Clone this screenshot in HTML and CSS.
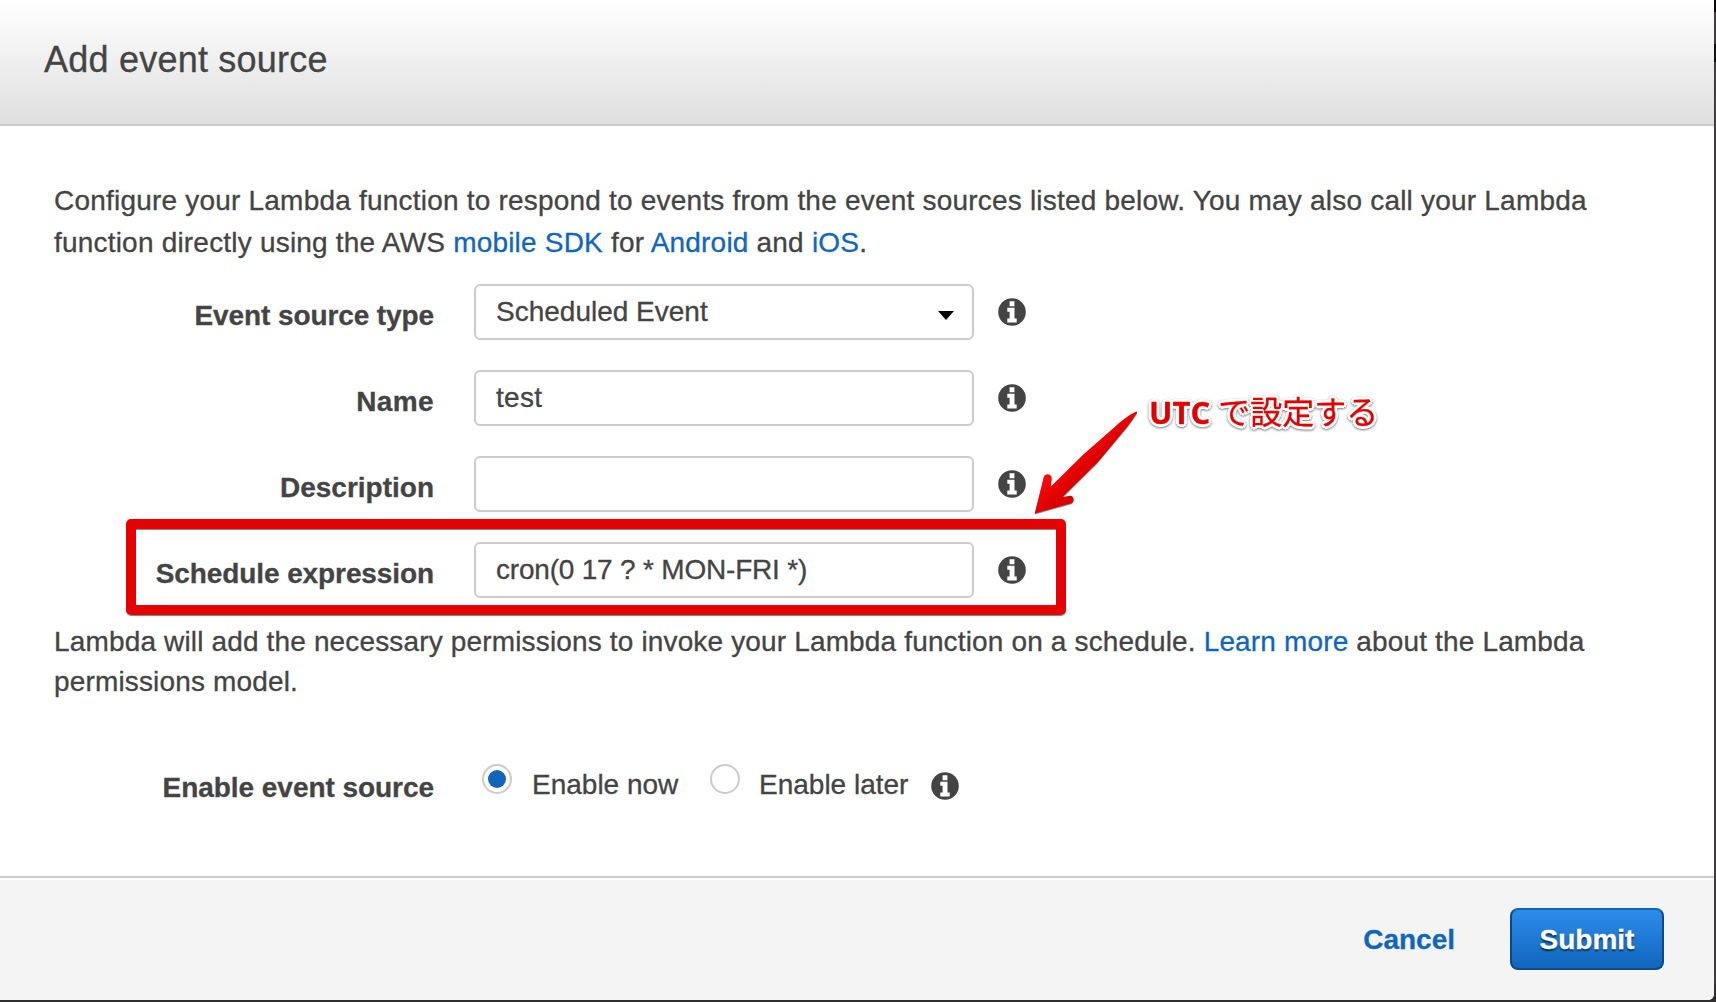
FILE: index.html
```html
<!DOCTYPE html>
<html lang="en">
<head>
<meta charset="utf-8">
<title>Add event source</title>
<link rel="stylesheet" href="styles.css">
</head>
<body>
<svg width="0" height="0" class="defs" aria-hidden="true">
  <symbol id="info" viewBox="0 0 28 28">
    <circle cx="14" cy="14" r="13.8" fill="#444"/>
    <path fill="#fff" d="M11.6 3.2h4.8v5h-4.8zM9.3 9.8h7.2v10.800h2.200v3.900H9.300v-3.900h2.300v-6.900H9.300z"/>
  </symbol>
</svg>
<main class="dialog">
  <header class="dialog-header"><h1 class="title">Add event source</h1></header>
  <section class="dialog-body">
    <p class="intro"><span class="line intro-first">Configure your Lambda function to respond to events from the event sources listed below. You may also call your Lambda</span> <span class="line intro-second">function directly using the AWS <a class="link">mobile SDK</a> for <a class="link">Android</a> and <a class="link">iOS</a>.</span></p>
    <div class="form">
      <div class="row"><label class="label type">Event source type</label><div class="field select">Scheduled Event<svg class="caret" viewBox="0 0 16 9"><path d="M0 0h16L8 9z"/></svg></div><svg class="info"><use href="#info"/></svg></div>
      <div class="row"><label class="label name">Name</label><div class="field test">test</div><svg class="info"><use href="#info"/></svg></div>
      <div class="row"><label class="label desc">Description</label><div class="field"></div><svg class="info"><use href="#info"/></svg></div>
      <div class="row"><label class="label sched">Schedule expression</label><div class="field cron">cron(0 17 ? * MON-FRI *)</div><svg class="info"><use href="#info"/></svg></div>
    </div>
    <p class="note"><span class="line note-first">Lambda will add the necessary permissions to invoke your Lambda function on a schedule. <a class="link">Learn more</a> about the Lambda</span> <span class="line note-second">permissions model.</span></p>
    <div class="enable">
      <span class="label enable-label">Enable event source</span>
      <span class="radio checked"></span><span class="option now">Enable now</span>
      <span class="radio"></span><span class="option later">Enable later</span>
      <svg class="info enable-info"><use href="#info"/></svg>
    </div>
  </section>
  <footer class="dialog-footer"><a class="cancel">Cancel</a><button class="submit">Submit</button></footer>
</main>
<div class="highlight"></div>
<svg class="arrow" viewBox="0 0 110 110">
  <defs><linearGradient id="red" x1="30" y1="55" x2="50" y2="75" gradientUnits="userSpaceOnUse"><stop offset="0" stop-color="#fb0505"/><stop offset=".8" stop-color="#d80000"/></linearGradient></defs>
  <path fill="url(#red)" d="M104.800 .8Q106.500 0 105.800 2C101 10 94 19 84 30.500L66.500 51.500L31.500 86L39 84.800C43.500 84.500 44 91.500 39.500 92.500L3.700 102.500L12.800 66C14 61.500 21 62.500 20.600 67.500L19.700 75.700L52.300 43.500L82 17.500C90 10 97 4.500 104.800 .8Z"/>
</svg>
<div class="annotation"><b class="utc">UTC</b> <span class="ja">で設定する</span></div>
</body>
</html>
```
FILE: styles.css
```css
* { box-sizing: border-box; }
body { margin: 0; height: 1002px; overflow: hidden; position: relative; background: linear-gradient(#080808 0 12px, #3f3d3e 12px 44px, #111 44px 62px, #3f3d3e 62px 980px, #302e2f 990px); color: #444; font: 28px/42px "Liberation Sans", Arial, sans-serif; -webkit-text-stroke: .3px; }
.defs { position: absolute; }
.dialog { width: 1714px; height: 1000px; display: flex; flex-direction: column; background: #fff; border-bottom-right-radius: 6px; overflow: hidden; }
.dialog-header { height: 126px; padding: 39px 44px 0; background: linear-gradient(#fff, #dfdfdf); border-bottom: 2px solid #ccc; }
.title { margin: 0; font-size: 36px; font-weight: 400; line-height: 42px; letter-spacing: .22px; }
.dialog-body { height: 750px; padding: 53px 54px 0; }
.intro, .note { margin: 0; }
.line { display: block; white-space: nowrap; width: max-content; }
.intro { height: 105px; line-height: 42px; padding-top: 1px; }
.intro-first { letter-spacing: .208px; }
.intro-second { letter-spacing: .2px; }
.note { line-height: 40px; height: 120px; padding-top: 24px; letter-spacing: .153px; }
.link, .cancel { color: #1166bb; }
.form { display: flex; flex-direction: column; gap: 30px; }
.row { display: flex; align-items: center; height: 56px; }
.label { width: 380px; flex: none; text-align: right; font-weight: 700; white-space: nowrap; padding-top: 8px; }
.type, .sched { letter-spacing: -.1px; }
.name { letter-spacing: .4px; }
.field { width: 500px; height: 56px; margin-left: 40px; padding: 5px 20px; border: 2px solid #ccc; border-radius: 6px; display: flex; justify-content: space-between; white-space: nowrap; }
.test { letter-spacing: .3px; }
.cron { letter-spacing: -.2px; }
.caret { width: 16px; height: 9px; margin: 20px -2px 0 0; }
.info { width: 28px; height: 28px; margin-left: 24px; flex: none; }
.enable { display: flex; height: 42px; margin-top: 46px; }
.enable-label { padding-top: 3px; letter-spacing: -.05px; }
.enable-info { margin-top: 8px; }
.radio { width: 30px; height: 30px; flex: none; border: 2px solid #ccc; border-radius: 50%; display: flex; margin-left: 48px; }
.radio.checked::after { content: ""; width: 18px; height: 18px; margin: 4px; border-radius: 50%; background: #1166bb; }
.option { flex: none; margin-left: 20px; white-space: nowrap; }
.now { width: 146px; }
.now + .radio { margin-left: 32px; }
.later { width: 148px; margin-left: 19px; }
.dialog-footer { height: 124px; border-top: 2px solid #ccc; padding: 30px 50px 0 0; display: flex; justify-content: flex-end; background: linear-gradient(#fff 0 2px, #f4f4f4 2px); font-weight: 700; }
.cancel { margin: 11px 55px 0 0; }
.submit { width: 154px; height: 62px; padding: 2px 0 0; border: 2px solid #0b4a8a; border-top-color: #1166bb; border-radius: 8px; background: linear-gradient(#2e8cec, #1166bb); color: #fff; font: inherit; text-shadow: 0 2px 2px rgba(0,0,0,.65); }
.highlight { position: absolute; left: 126px; top: 519px; width: 940px; height: 96px; border: 10px solid #e60202; border-radius: 5px; box-shadow: 0 1px 0 #888, inset 0 1px 0 #888; }
.arrow { position: absolute; left: 1031px; top: 411px; width: 110px; height: 110px; filter: drop-shadow(0 1px 0 #888); }
.annotation { position: absolute; left: 1149px; top: 389px; white-space: nowrap; color: #e00000; font: 31px/42px "Open Sans", "Noto Sans CJK JP", sans-serif; text-shadow: -3px 0 #fff, 3px 0 #fff, 0 3px #fff, 0 -3px #fff, 2px 2px #fff, -2px 2px #fff, 2px -2px #fff, -2px -2px #fff; filter: drop-shadow(0 1px 1px #777); }
.ja { font-family: "Noto Sans CJK JP", sans-serif; font-size: 32px; }
```
